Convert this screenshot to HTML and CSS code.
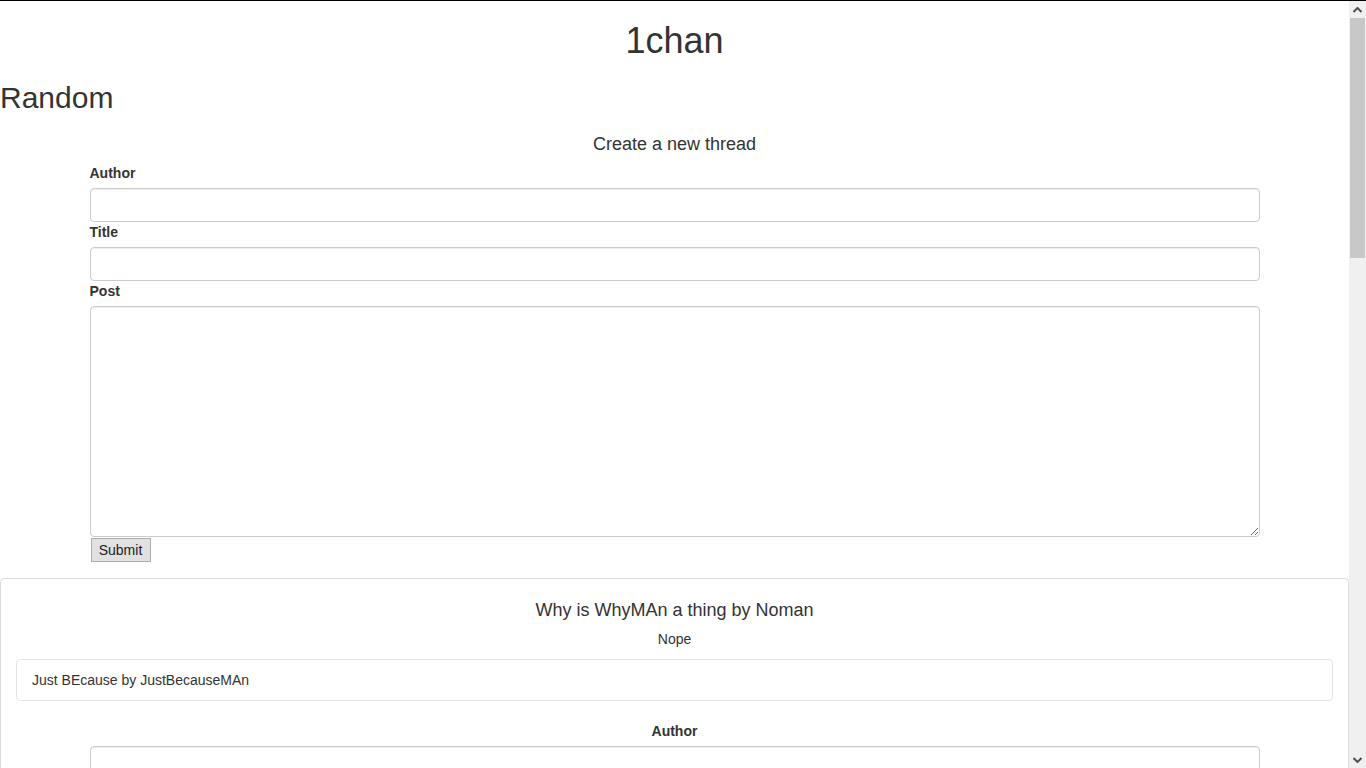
FILE: index.html
```html
<!DOCTYPE html>
<html lang="en">
<head>
<meta charset="utf-8">
<title>1chan</title>
<link rel="stylesheet" href="styles.css">
</head>
<body>
<div class="page">
  <h1 class="site-title">1chan</h1>
  <h2 class="board-title">Random</h2>
  <form class="thread-form container">
    <h4 class="form-title">Create a new thread</h4>
    <label class="field-label">Author</label>
    <input class="form-control" type="text">
    <label class="field-label">Title</label>
    <input class="form-control" type="text">
    <label class="field-label">Post</label>
    <textarea class="form-control post-area"></textarea>
    <button class="btn-submit" type="button">Submit</button>
  </form>
  <div class="panel">
    <div class="panel-body">
      <h4 class="thread-title">Why is WhyMAn a thing by Noman</h4>
      <p class="thread-text">Nope</p>
      <div class="well">Just BEcause by JustBecauseMAn</div>
      <form class="reply-form container">
        <label class="field-label">Author</label>
        <input class="form-control" type="text">
        <label class="field-label">Post</label>
        <textarea class="form-control post-area"></textarea>
      </form>
    </div>
  </div>
</div>
<div class="scrollbar">
  <div class="sb-arrow">
    <svg width="9" height="6" viewBox="0 0 9 6"><path d="M0.5 5 L4.5 1 L8.5 5" fill="none" stroke="#505050" stroke-width="2"/></svg>
  </div>
  <div class="sb-track"><div class="sb-thumb"></div></div>
  <div class="sb-arrow">
    <svg width="9" height="6" viewBox="0 0 9 6"><path d="M0.5 1 L4.5 5 L8.5 1" fill="none" stroke="#505050" stroke-width="2"/></svg>
  </div>
</div>
</body>
</html>
```
FILE: styles.css
```css
html {
  overflow: hidden;
}
body {
  margin: 0;
  border-top: 1px solid #000;
  padding-right: 17px;
  font-family: "Liberation Sans", Arial, sans-serif;
  font-size: 14px;
  line-height: 20px;
  color: #333;
  background: #fff;
}
.page {
  width: 1349px;
}
.site-title {
  font-size: 36px;
  font-weight: 500;
  line-height: 1.1;
  margin: 20px 0 10px;
  text-align: center;
}
.board-title {
  font-size: 30px;
  font-weight: 500;
  line-height: 1.1;
  margin: 20px 0 10px;
}
.container {
  width: 1170px;
  margin: 0 auto;
}
.form-title {
  font-size: 18px;
  font-weight: 500;
  line-height: 1.1;
  text-align: center;
  margin: 21px 0 9px;
}
.thread-form {
  margin-bottom: 16px;
}
.field-label {
  display: block;
  font-weight: bold;
  margin-bottom: 5px;
}
.form-control {
  display: block;
  box-sizing: border-box;
  width: 100%;
  height: 34px;
  margin: 0;
  padding: 6px 12px;
  font: inherit;
  color: #555;
  background: #fff;
  border: 1px solid #ccc;
  border-radius: 4px;
  box-shadow: inset 0 1px 1px rgba(0, 0, 0, .075);
}
.post-area {
  height: 231px;
  resize: vertical;
}
.btn-submit {
  display: block;
  box-sizing: border-box;
  width: 60px;
  height: 24px;
  margin: 1px 0 0 1px;
  padding: 0 7px;
  font-family: "Liberation Sans", Arial, sans-serif;
  font-size: 14px;
  color: #222;
  background: #e1e1e1;
  border: 1px solid #adadad;
  border-radius: 0;
}
.panel {
  border: 1px solid #ddd;
  border-radius: 4px;
  text-align: center;
}
.panel-body {
  padding: 15px;
}
.thread-title {
  font-size: 18px;
  font-weight: 500;
  line-height: 1.1;
  margin: 7px 0 8px;
}
.thread-text {
  margin: 0 0 10px;
}
.well {
  text-align: left;
  padding: 10px 15px;
  border: 1px solid #e3e3e3;
  border-radius: 4px;
  margin-bottom: 20px;
}
.reply-form .form-control {
  text-align: left;
}
.scrollbar {
  position: fixed;
  top: 1px;
  right: 0;
  bottom: 0;
  width: 17px;
  background: #f0f0f0;
  display: flex;
  flex-direction: column;
}
.sb-arrow {
  height: 17px;
  display: flex;
  align-items: center;
  justify-content: center;
}
.sb-track {
  flex: 1;
  padding: 0 1px;
}
.sb-thumb {
  height: 240px;
  background: #c8c8c8;
}
```
